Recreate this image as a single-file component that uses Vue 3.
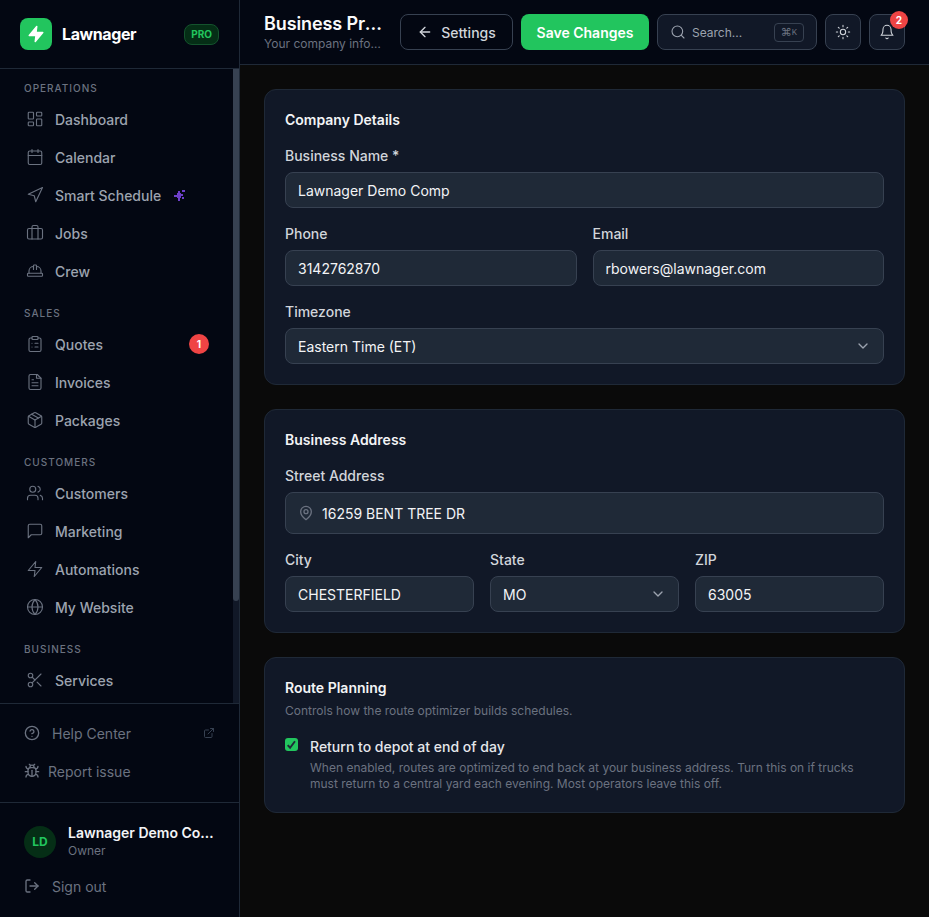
<script setup>
const navGroups = [
  {
    label: 'Operations',
    items: [
      { name: 'Dashboard', icon: 'dashboard' },
      { name: 'Calendar', icon: 'calendar' },
      { name: 'Smart Schedule', icon: 'send', sparkle: true },
      { name: 'Jobs', icon: 'briefcase' },
      { name: 'Crew', icon: 'hardhat' }
    ]
  },
  {
    label: 'Sales',
    items: [
      { name: 'Quotes', icon: 'clipboard', badge: 1 },
      { name: 'Invoices', icon: 'file' },
      { name: 'Packages', icon: 'package' }
    ]
  },
  {
    label: 'Customers',
    items: [
      { name: 'Customers', icon: 'users' },
      { name: 'Marketing', icon: 'message' },
      { name: 'Automations', icon: 'zap' },
      { name: 'My Website', icon: 'globe' }
    ]
  },
  {
    label: 'Business',
    items: [
      { name: 'Services', icon: 'scissors' }
    ]
  }
]

const icons = {
  dashboard: '<rect x="3" y="3" width="7" height="9" rx="1"/><rect x="14" y="3" width="7" height="5" rx="1"/><rect x="14" y="12" width="7" height="9" rx="1"/><rect x="3" y="16" width="7" height="5" rx="1"/>',
  calendar: '<path d="M8 2v4M16 2v4"/><rect x="3" y="4" width="18" height="18" rx="2"/><path d="M3 10h18"/>',
  send: '<path d="M3 11 22 2l-9 19-2-8-8-2z"/>',
  briefcase: '<path d="M16 20V4a2 2 0 0 0-2-2h-4a2 2 0 0 0-2 2v16"/><rect x="2" y="6" width="20" height="14" rx="2"/>',
  hardhat: '<path d="M2 18a1 1 0 0 0 1 1h18a1 1 0 0 0 1-1v-2a1 1 0 0 0-1-1H3a1 1 0 0 0-1 1v2z"/><path d="M10 10V5a1 1 0 0 1 1-1h2a1 1 0 0 1 1 1v5"/><path d="M4 15v-3a6 6 0 0 1 6-6"/><path d="M14 6a6 6 0 0 1 6 6v3"/>',
  clipboard: '<rect x="8" y="2" width="8" height="4" rx="1"/><path d="M16 4h2a2 2 0 0 1 2 2v14a2 2 0 0 1-2 2H6a2 2 0 0 1-2-2V6a2 2 0 0 1 2-2h2"/><path d="M12 11h4M12 16h4M8 11h.01M8 16h.01"/>',
  file: '<path d="M15 2H6a2 2 0 0 0-2 2v16a2 2 0 0 0 2 2h12a2 2 0 0 0 2-2V7z"/><path d="M14 2v5h6"/><path d="M16 13H8M16 17H8M10 9H8"/>',
  package: '<path d="M11 21.73a2 2 0 0 0 2 0l7-4A2 2 0 0 0 21 16V8a2 2 0 0 0-1-1.73l-7-4a2 2 0 0 0-2 0l-7 4A2 2 0 0 0 3 8v8a2 2 0 0 0 1 1.73z"/><path d="M12 22V12"/><path d="M3.3 7 12 12l8.7-5"/><path d="m7.5 4.27 9 5.15"/>',
  users: '<path d="M16 21v-2a4 4 0 0 0-4-4H6a4 4 0 0 0-4 4v2"/><circle cx="9" cy="7" r="4"/><path d="M22 21v-2a4 4 0 0 0-3-3.87"/><path d="M16 3.13a4 4 0 0 1 0 7.75"/>',
  message: '<path d="M21 15a2 2 0 0 1-2 2H7l-4 4V5a2 2 0 0 1 2-2h14a2 2 0 0 1 2 2z"/>',
  zap: '<path d="M13 2 3 14h9l-1 8 10-12h-9l1-8z"/>',
  globe: '<circle cx="12" cy="12" r="10"/><path d="M12 2a14.5 14.5 0 0 0 0 20 14.5 14.5 0 0 0 0-20"/><path d="M2 12h20"/>',
  scissors: '<circle cx="6" cy="6" r="3"/><path d="M8.12 8.12 12 12"/><path d="M20 4 8.12 15.88"/><circle cx="6" cy="18" r="3"/><path d="M14.8 14.8 20 20"/>',
  help: '<circle cx="12" cy="12" r="10"/><path d="M9.09 9a3 3 0 0 1 5.83 1c0 2-3 3-3 3"/><path d="M12 17h.01"/>',
  external: '<path d="M15 3h6v6"/><path d="M10 14 21 3"/><path d="M18 13v6a2 2 0 0 1-2 2H5a2 2 0 0 1-2-2V8a2 2 0 0 1 2-2h6"/>',
  bug: '<path d="m8 2 1.88 1.88M14.12 3.88 16 2"/><path d="M9 7.13v-1a3 3 0 1 1 6 0v1"/><path d="M12 20c-3.3 0-6-2.7-6-6v-3a4 4 0 0 1 4-4h4a4 4 0 0 1 4 4v3c0 3.3-2.7 6-6 6z"/><path d="M12 20v-9"/><path d="M6.53 9C4.6 8.8 3 7.1 3 5M6 13H2M3 21c0-2.1 1.7-3.9 3.8-4M20.97 5c0 2.1-1.6 3.8-3.5 4M22 13h-4M17.2 17c2.1.1 3.8 1.9 3.8 4"/>',
  logout: '<path d="M9 21H5a2 2 0 0 1-2-2V5a2 2 0 0 1 2-2h4"/><path d="m16 17 5-5-5-5"/><path d="M21 12H9"/>'
}
</script>

<template>
  <div class="app">
    <aside class="sidebar">
      <div class="brand">
        <div class="logo">
          <svg viewBox="0 0 24 24" width="18" height="18" fill="#fff" stroke="#fff" stroke-width="2" stroke-linejoin="round"><path d="M13 2 3 14h9l-1 8 10-12h-9l1-8z" /></svg>
        </div>
        <span class="brand-name">Lawnager</span>
        <span class="pro">PRO</span>
      </div>

      <div class="nav-wrap">
        <nav class="nav">
          <div v-for="group in navGroups" :key="group.label" class="nav-group">
            <div class="nav-label">{{ group.label }}</div>
            <a v-for="item in group.items" :key="item.name" class="nav-item">
              <svg class="icon" viewBox="0 0 24 24" v-html="icons[item.icon]"></svg>
              <span>{{ item.name }}</span>
              <svg v-if="item.sparkle" class="sparkle" viewBox="0 0 11 11" fill="#6d3fc9">
                <rect x="3" y="3" width="4" height="5" />
                <rect x="4" y="1" width="2" height="2" />
                <rect x="4" y="8" width="2" height="3" />
                <rect x="0" y="5" width="3" height="2" />
                <rect x="7" y="4" width="2" height="2" />
                <rect x="8" y="0" width="3" height="2" />
                <rect x="8" y="7" width="2" height="2" />
              </svg>
              <span v-if="item.badge" class="nav-badge">{{ item.badge }}</span>
            </a>
          </div>
        </nav>
        <div class="scroll-track"><div class="scroll-thumb"></div></div>
      </div>

      <div class="side-links">
        <a class="side-link">
          <svg class="icon" viewBox="0 0 24 24" v-html="icons.help"></svg>
          <span>Help Center</span>
          <svg class="icon-ext" viewBox="0 0 24 24" v-html="icons.external"></svg>
        </a>
        <a class="side-link tight">
          <svg class="icon" viewBox="0 0 24 24" v-html="icons.bug"></svg>
          <span>Report issue</span>
        </a>
      </div>

      <div class="account">
        <div class="user">
          <div class="avatar">LD</div>
          <div class="user-text">
            <div class="user-name">Lawnager Demo Company</div>
            <div class="user-role">Owner</div>
          </div>
        </div>
        <a class="side-link signout">
          <svg class="icon" viewBox="0 0 24 24" v-html="icons.logout"></svg>
          <span>Sign out</span>
        </a>
      </div>
    </aside>

    <div class="main">
      <header class="topbar">
        <div class="heading">
          <h1>Business Profile</h1>
          <p>Your company information</p>
        </div>
        <button class="btn btn-ghost">
          <svg class="icon-sm" viewBox="0 0 24 24"><path d="m12 19-7-7 7-7" /><path d="M19 12H5" /></svg>
          Settings
        </button>
        <button class="btn btn-save">Save Changes</button>
        <div class="search">
          <svg class="icon-search" viewBox="0 0 24 24"><circle cx="11" cy="11" r="8" /><path d="m21 21-4.3-4.3" /></svg>
          <span class="search-text">Search...</span>
          <span class="kbd"><span class="kbd-cmd">⌘</span>K</span>
        </div>
        <button class="icon-btn">
          <svg class="icon-search light" viewBox="0 0 24 24"><circle cx="12" cy="12" r="4" /><path d="M12 2v2M12 20v2M4.93 4.93l1.41 1.41M17.66 17.66l1.41 1.41M2 12h2M20 12h2M6.34 17.66l-1.41 1.41M19.07 4.93l-1.41 1.41" /></svg>
        </button>
        <button class="icon-btn bell">
          <svg class="icon-search light" viewBox="0 0 24 24"><path d="M6 8a6 6 0 0 1 12 0c0 7 3 9 3 9H3s3-2 3-9" /><path d="M10.3 21a1.94 1.94 0 0 0 3.4 0" /></svg>
          <span class="bell-badge">2</span>
        </button>
      </header>

      <main class="content">
        <section class="card">
          <h2>Company Details</h2>
          <div class="field">
            <label>Business Name *</label>
            <input class="input" value="Lawnager Demo Comp" />
          </div>
          <div class="row two">
            <div class="field">
              <label>Phone</label>
              <input class="input" value="3142762870" />
            </div>
            <div class="field">
              <label>Email</label>
              <input class="input" value="rbowers@lawnager.com" />
            </div>
          </div>
          <div class="field">
            <label>Timezone</label>
            <div class="input select">
              <span>Eastern Time (ET)</span>
              <svg class="chevron" viewBox="0 0 24 24"><path d="m6 9 6 6 6-6" /></svg>
            </div>
          </div>
        </section>

        <section class="card">
          <h2>Business Address</h2>
          <div class="field">
            <label>Street Address</label>
            <div class="input street">
              <svg class="pin" viewBox="0 0 24 24"><path d="M20 10c0 6-8 12-8 12s-8-6-8-12a8 8 0 0 1 16 0z" /><circle cx="12" cy="10" r="3" /></svg>
              <span>16259 BENT TREE DR</span>
            </div>
          </div>
          <div class="row three">
            <div class="field">
              <label>City</label>
              <input class="input" value="CHESTERFIELD" />
            </div>
            <div class="field">
              <label>State</label>
              <div class="input select">
                <span>MO</span>
                <svg class="chevron" viewBox="0 0 24 24"><path d="m6 9 6 6 6-6" /></svg>
              </div>
            </div>
            <div class="field">
              <label>ZIP</label>
              <input class="input" value="63005" />
            </div>
          </div>
        </section>

        <section class="card">
          <h2 class="with-sub">Route Planning</h2>
          <p class="sub">Controls how the route optimizer builds schedules.</p>
          <div class="check-row">
            <span class="check">
              <svg viewBox="0 0 12 12"><path d="m2.5 6.5 2.2 2.5 4.5-6" /></svg>
            </span>
            <div>
              <div class="check-title">Return to depot at end of day</div>
              <p class="check-desc">When enabled, routes are optimized to end back at your business address. Turn this on if trucks must return to a central yard each evening. Most operators leave this off.</p>
            </div>
          </div>
        </section>
      </main>
    </div>
  </div>
</template>

<style>
html, body {
  margin: 0;
  background: #0a0a0a;
}
</style>

<style scoped>
.app {
  display: flex;
  height: 917px;
  overflow: hidden;
  font-family: 'Inter', 'Liberation Sans', sans-serif;
  font-size: 14px;
  color: #f3f4f6;
}

/* sidebar */
.sidebar {
  width: 240px;
  flex-shrink: 0;
  display: flex;
  flex-direction: column;
  background: #030712;
  border-right: 1px solid #1f2937;
  box-sizing: border-box;
}

.brand {
  height: 69px;
  flex-shrink: 0;
  box-sizing: border-box;
  display: flex;
  align-items: center;
  padding: 0 20px;
  border-bottom: 1px solid #1f2937;
}

.logo {
  width: 32px;
  height: 32px;
  border-radius: 8px;
  background: #22c55e;
  display: flex;
  align-items: center;
  justify-content: center;
}

.brand-name {
  margin-left: 10px;
  font-size: 16px;
  font-weight: 700;
  letter-spacing: -0.4px;
  color: #fff;
}

.pro {
  margin-left: auto;
  height: 21px;
  box-sizing: border-box;
  padding: 0 6px;
  display: flex;
  align-items: center;
  border: 1px solid #14532d;
  border-radius: 8px;
  background: #052e16;
  color: #22c55e;
  font-size: 10px;
  font-weight: 700;
}

.nav-wrap {
  height: 634px;
  flex-shrink: 0;
  display: flex;
}

.nav {
  flex: 1;
  min-width: 0;
  overflow: hidden;
  padding: 10px 12px 0;
  box-sizing: border-box;
}

.scroll-track {
  width: 6px;
  flex-shrink: 0;
  background: #111827;
}

.scroll-thumb {
  height: 532px;
  border-radius: 0 0 3px 3px;
  background: #374151;
}

.nav-group {
  margin-bottom: 14px;
}

.nav-label {
  height: 18px;
  line-height: 18px;
  padding-left: 12px;
  margin-bottom: 3px;
  font-size: 10px;
  font-weight: 500;
  letter-spacing: 1px;
  text-transform: uppercase;
  color: #6b7280;
}

.nav-item {
  height: 38px;
  display: flex;
  align-items: center;
  padding: 0 12px;
  color: #9ca3af;
  font-weight: 500;
}

.icon {
  width: 16px;
  height: 16px;
  flex-shrink: 0;
  fill: none;
  stroke: currentColor;
  stroke-width: 2;
  stroke-linecap: round;
  stroke-linejoin: round;
}

.nav-item .icon {
  width: 18px;
  height: 18px;
  stroke-width: 1.5;
  margin-left: 2px;
  margin-right: 11px;
  color: #6b7280;
}

.sparkle {
  width: 11px;
  height: 11px;
  margin-left: 13px;
}

.nav-badge {
  margin-left: auto;
  width: 20px;
  height: 20px;
  border-radius: 50%;
  background: #ef4444;
  color: #fff;
  font-size: 10px;
  font-weight: 700;
  display: flex;
  align-items: center;
  justify-content: center;
}

.side-links {
  flex-shrink: 0;
  height: 99px;
  box-sizing: border-box;
  padding: 10px 24px 0;
  border-top: 1px solid #1f2937;
}

.side-link {
  height: 38px;
  display: flex;
  align-items: center;
  color: #6b7280;
  font-size: 14px;
}

.side-link .icon {
  margin-right: 12px;
}

.side-link.tight .icon {
  margin-right: 8px;
}

.icon-ext {
  margin-left: auto;
  margin-right: 0;
  width: 12px;
  height: 12px;
  fill: none;
  stroke: #374151;
  stroke-width: 2;
  stroke-linecap: round;
  stroke-linejoin: round;
}

.account {
  flex: 1;
  padding: 21px 24px 0;
  border-top: 1px solid #1f2937;
}

.user {
  display: flex;
  align-items: center;
  gap: 12px;
}

.avatar {
  width: 32px;
  height: 32px;
  flex-shrink: 0;
  border-radius: 50%;
  background: #052e16;
  color: #22c55e;
  font-size: 12px;
  font-weight: 700;
  display: flex;
  align-items: center;
  justify-content: center;
}

.user-text {
  min-width: 0;
  flex: 1;
}

.user-name {
  font-size: 14px;
  line-height: 18px;
  font-weight: 600;
  color: #f3f4f6;
  overflow: hidden;
  white-space: nowrap;
  text-overflow: ellipsis;
}

.user-role {
  font-size: 12px;
  line-height: 16px;
  margin-top: 1px;
  color: #6b7280;
}

.signout {
  margin-top: 8px;
}

/* top bar */
.main {
  flex: 1;
  min-width: 0;
  display: flex;
  flex-direction: column;
}

.topbar {
  height: 65px;
  flex-shrink: 0;
  box-sizing: border-box;
  display: flex;
  align-items: center;
  gap: 8px;
  padding: 0 24px;
  background: #030712;
  border-bottom: 1px solid #1f2937;
}

.heading {
  width: 128px;
  flex-shrink: 0;
  min-width: 0;
}

.heading h1 {
  margin: 0;
  font-size: 18px;
  line-height: 24px;
  font-weight: 600;
  letter-spacing: -0.1px;
  color: #f9fafb;
  overflow: hidden;
  white-space: nowrap;
  text-overflow: ellipsis;
  width: 122px;
}

.heading p {
  margin: 0;
  font-size: 12px;
  line-height: 16px;
  color: #6b7280;
  overflow: hidden;
  white-space: nowrap;
  text-overflow: ellipsis;
  width: 118px;
}

.btn {
  height: 36px;
  box-sizing: border-box;
  border-radius: 8px;
  font: 600 14px 'Inter', 'Liberation Sans', sans-serif;
  display: flex;
  align-items: center;
  justify-content: center;
  flex-shrink: 0;
}

.btn-ghost {
  width: 113px;
  gap: 8px;
  background: transparent;
  border: 1px solid #374151;
  color: #d1d5db;
  font-weight: 500;
}

.btn-save {
  width: 128px;
  background: #22c55e;
  border: 0;
  color: #fff;
}

.icon-sm {
  width: 16px;
  height: 16px;
  fill: none;
  stroke: currentColor;
  stroke-width: 2;
  stroke-linecap: round;
  stroke-linejoin: round;
}

.icon-search {
  width: 16px;
  height: 16px;
  flex-shrink: 0;
  fill: none;
  stroke: #9ca3af;
  stroke-width: 1.6;
  stroke-linecap: round;
  stroke-linejoin: round;
}

.icon-search.light {
  stroke: #d1d5db;
}

.search {
  width: 160px;
  height: 36px;
  box-sizing: border-box;
  flex-shrink: 0;
  display: flex;
  align-items: center;
  padding: 0 12px;
  gap: 6px;
  border: 1px solid #374151;
  border-radius: 8px;
  background: #111827;
}

.search-text {
  flex: 1;
  color: #9ca3af;
  font-size: 12px;
}

.kbd {
  width: 30px;
  height: 19px;
  box-sizing: border-box;
  border: 1px solid #374151;
  border-radius: 4px;
  color: #6b7280;
  font-size: 8px;
  display: flex;
  align-items: center;
  justify-content: center;
}

.kbd-cmd {
  font-size: 11px;
  font-family: 'DejaVu Sans', sans-serif;
}

.icon-btn {
  width: 36px;
  height: 36px;
  flex-shrink: 0;
  box-sizing: border-box;
  padding: 0;
  border: 1px solid #374151;
  border-radius: 8px;
  background: #111827;
  display: flex;
  align-items: center;
  justify-content: center;
}

.bell {
  position: relative;
}

.bell-badge {
  position: absolute;
  top: -4px;
  right: -4px;
  width: 18px;
  height: 18px;
  border-radius: 50%;
  background: #ef4444;
  color: #fff;
  font: 700 10px 'Inter', 'Liberation Sans', sans-serif;
  display: flex;
  align-items: center;
  justify-content: center;
}

/* form cards */
.content {
  flex: 1;
  padding: 24px;
  display: flex;
  flex-direction: column;
  gap: 24px;
}

.card {
  border: 1px solid #1f2937;
  border-radius: 12px;
  background: #111827;
  padding: 20px;
  display: flex;
  flex-direction: column;
  gap: 16px;
}

.card h2 {
  margin: 0;
  height: 20px;
  line-height: 20px;
  font-size: 14px;
  font-weight: 600;
  color: #f3f4f6;
}

.field {
  display: flex;
  flex-direction: column;
  gap: 6px;
  min-width: 0;
}

.field label {
  height: 20px;
  line-height: 20px;
  font-size: 14px;
  font-weight: 500;
  color: #d1d5db;
}

.input {
  height: 36px;
  width: 100%;
  box-sizing: border-box;
  padding: 0 12px;
  border: 1px solid #374151;
  border-radius: 8px;
  background: #1f2937;
  color: #f3f4f6;
  font: 400 14px 'Inter', 'Liberation Sans', sans-serif;
  outline: none;
}

.select {
  display: flex;
  align-items: center;
  justify-content: space-between;
}

.chevron {
  width: 16px;
  height: 16px;
  fill: none;
  stroke: #9ca3af;
  stroke-width: 2;
  stroke-linecap: round;
  stroke-linejoin: round;
}

.street {
  height: 42px;
  display: flex;
  align-items: center;
  gap: 8px;
}

.pin {
  width: 16px;
  height: 16px;
  flex-shrink: 0;
  fill: none;
  stroke: #6b7280;
  stroke-width: 2;
  stroke-linecap: round;
  stroke-linejoin: round;
}

.row {
  display: grid;
  gap: 16px;
}

.row.two {
  grid-template-columns: 1fr 1fr;
}

.row.three {
  grid-template-columns: 1fr 1fr 1fr;
}

.card h2.with-sub {
  margin-bottom: -11px;
}

.sub {
  margin: 0 0 2px;
  font-size: 12px;
  line-height: 16px;
  color: #6b7280;
}

.check-row {
  display: flex;
  gap: 12px;
}

.check {
  width: 13px;
  height: 13px;
  margin-top: 1px;
  flex-shrink: 0;
  border-radius: 3px;
  background: #22c55e;
  display: flex;
}

.check svg {
  width: 13px;
  height: 13px;
  fill: none;
  stroke: #1f2937;
  stroke-width: 1.8;
}

.check-title {
  font-size: 14px;
  line-height: 20px;
  font-weight: 500;
  color: #e5e7eb;
}

.check-desc {
  margin: 3px 0 0;
  font-size: 12px;
  line-height: 16px;
  color: #6b7280;
}
</style>
